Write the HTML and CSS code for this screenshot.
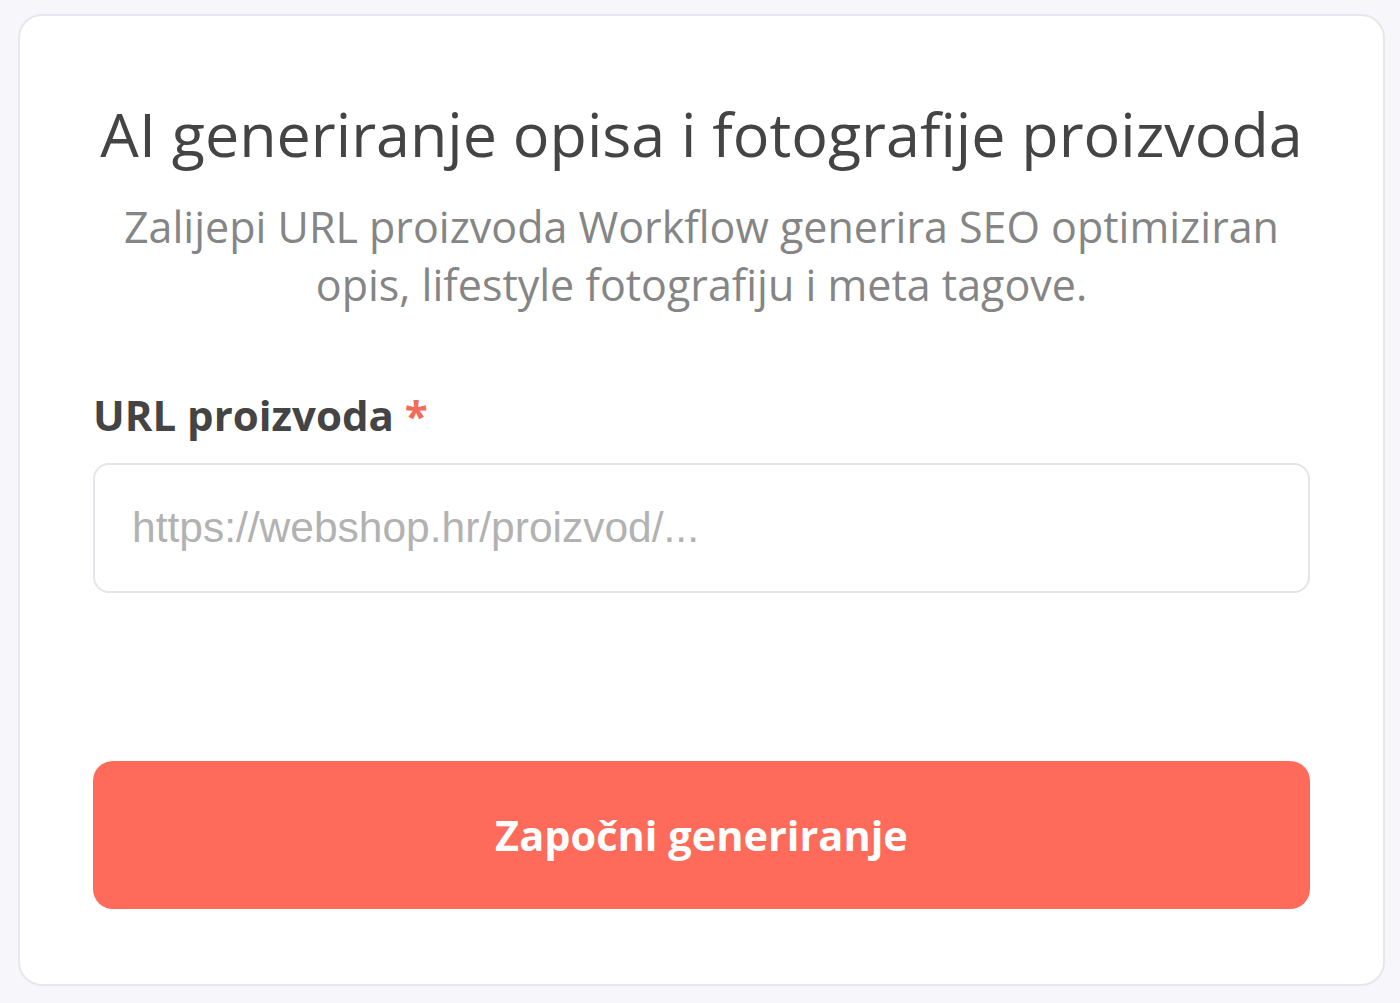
FILE: index.html
```html
<!DOCTYPE html>
<html lang="hr">
<head>
    <meta charset="UTF-8">
    <meta name="viewport" content="width=device-width, initial-scale=1.0">
    <title>AI generiranje opisa</title>
    <link rel="stylesheet" href="styles.css">
</head>
<body>
    <div class="card">
        <h1>AI generiranje opisa i fotografije proizvoda</h1>
        <p class="intro">Zalijepi URL proizvoda Workflow generira SEO optimiziran opis, lifestyle fotografiju i meta tagove.</p>

        <div class="field">
            <label for="product-url">URL proizvoda <span class="req">*</span></label>
            <input type="text" id="product-url" placeholder="https://webshop.hr/proizvod/...">
        </div>

        <button class="start-btn">Započni generiranje</button>
    </div>
</body>
</html>
```

FILE: styles.css
```css
body {
    margin: 0;
    padding: 14px 15px 17px 18px;
    background-color: #f6f6fb;
    font-family: 'Open Sans', sans-serif;
    color: #444;
}
.card {
    box-sizing: border-box;
    height: 972px;
    background: white;
    border: 2px solid #e6e6ee;
    border-radius: 24px;
    padding: 66px 73px 0;
    text-align: center;
}
.card h1 {
    margin: 0 0 12px;
    font-size: 61px;
    font-weight: 400;
    line-height: 104px;
    color: #444;
}
.intro {
    margin: 0 20px;
    font-size: 43px;
    line-height: 58px;
    color: #858585;
}
.field {
    margin-top: 73px;
    text-align: left;
}
.field label {
    display: block;
    font-size: 42px;
    font-weight: 700;
    line-height: 56px;
    color: #444;
}
.req {
    color: #f26b5b;
}
.field input {
    box-sizing: border-box;
    display: block;
    width: 100%;
    height: 130px;
    margin-top: 20px;
    padding: 0 37px;
    font-family: 'Liberation Sans', Arial, sans-serif;
    font-size: 42.5px;
    border: 2px solid #e4e4ea;
    border-radius: 16px;
    outline: none;
}
.field input::placeholder {
    color: #b2b2b2;
}
.start-btn {
    display: block;
    width: 100%;
    height: 148px;
    margin-top: 168px;
    font-family: 'Open Sans', sans-serif;
    font-size: 41.5px;
    font-weight: 700;
    color: white;
    background-color: #ff6b5a;
    border: none;
    border-radius: 20px;
    cursor: pointer;
}
```
